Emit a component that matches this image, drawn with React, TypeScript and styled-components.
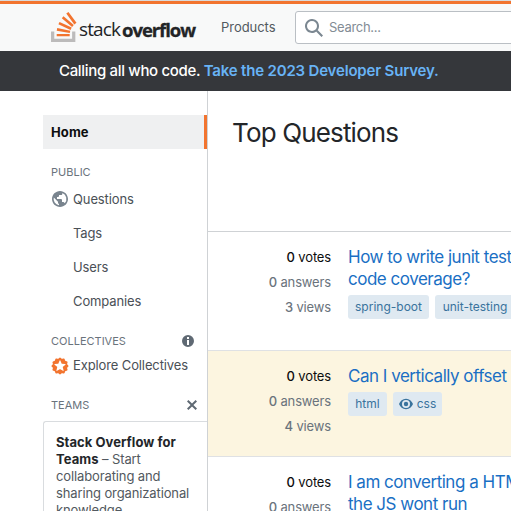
import React from 'react';
import styled, { createGlobalStyle } from 'styled-components';

const GlobalStyle = createGlobalStyle`
  * { box-sizing: border-box; }
  body { margin: 0; background: #fff; overflow: hidden; }
`;

const Page = styled.div`
  width: 511px;
  height: 511px;
  overflow: hidden;
  display: flex;
  flex-direction: column;
  background: #fff;
  color: #232629;
  font-family: Inter, 'Liberation Sans', sans-serif;
  font-size: 13px;
  line-height: 17px;
  letter-spacing: -0.12px;
  white-space: nowrap;
`;

const TopBar = styled.header`
  flex: none;
  height: 51px;
  display: flex;
  align-items: center;
  border-top: 1px solid #d9dadb;
  background: #f8f9f9;
  box-shadow: inset 0 3px 0 #f2742f;
  padding: 3px 0 0 51px;
`;

const Logo = styled.a`
  flex: none;
  display: flex;
  width: 146px;
  height: 31px;
  gap: 3px;
`;

const LogoMark = styled.svg`
  flex: none;
  display: block;
`;

const Wordmark = styled.span`
  display: flex;
  gap: 2px;
  font-family: 'Open Sans', sans-serif;
  line-height: 35px;
  color: #222426;
`;

const Stack = styled.span`
  flex: none;
  font-size: 19px;
  width: 41px;
  margin-left: -1px;
  letter-spacing: -0.9px;
`;

const Overflow = styled.span`
  font-size: 18.500px;
  font-weight: 700;
  letter-spacing: -1.050px;
  -webkit-text-stroke: 0.3px #222426;
`;

const Products = styled.a`
  flex: none;
  margin-left: 24px;
  width: 74px;
  color: #525960;
  letter-spacing: -0.05px;
`;

const SearchBox = styled.div`
  flex: none;
  display: flex;
  align-items: center;
  gap: 6px;
  width: 300px;
  height: 33px;
  padding-left: 9px;
  border: 1px solid #babfc4;
  border-radius: 3px;
  background: #fff;
  color: #838c95;
  letter-spacing: -0.3px;
`;

const Banner = styled.div`
  flex: none;
  height: 40px;
  padding-left: 59px;
  background: #35373b;
  color: #fff;
  font-size: 15px;
  line-height: 40px;
  font-weight: 500;
  letter-spacing: -0.33px;
`;

const BannerLink = styled.a`
  color: #68b3f5;
  font-weight: 600;
  letter-spacing: -0.18px;
`;

const Body = styled.div`
  flex: 1;
  min-height: 0;
  display: flex;
`;

const Sidebar = styled.nav`
  flex: none;
  width: 208px;
  padding: 24px 0 0 43px;
  border-right: 1px solid #cfd2d5;
  color: #4a5056;
`;

const Home = styled.a`
  display: block;
  height: 34px;
  padding-left: 8px;
  line-height: 35px;
  background: #eff0f1;
  border-right: 3px solid #f2742f;
  color: #0c0d0e;
  font-weight: 700;
  letter-spacing: 0.1px;
`;

const SectionHead = styled.div<{ $top: number }>`
  display: flex;
  align-items: center;
  justify-content: space-between;
  margin-top: ${(p) => p.$top}px;
  height: 16px;
  padding: 0 8px;
  font-size: 11px;
  letter-spacing: 0;
  color: #6a737c;
`;

const NavItem = styled.a<{ $height?: number }>`
  display: flex;
  align-items: center;
  gap: 4px;
  height: ${(p) => p.$height ?? 34}px;
  padding-left: 8px;
`;

const IconSlot = styled.span`
  display: flex;
  width: 18px;
`;

const TeamsCard = styled.div`
  margin-top: 8px;
  height: 130px;
  padding: 12px;
  border: 1px solid #d9dcdf;
  border-right: 0;
  border-radius: 3px 0 0 0;
  color: #525960;
`;

const Strong = styled.b`
  color: #232629;
  font-weight: 700;
  letter-spacing: 0.06px;
`;

const Main = styled.main`
  flex: 1;
  min-width: 0;
  overflow: hidden;
`;

const Title = styled.h1`
  margin: 0;
  height: 141px;
  padding: 24px 0 0 24px;
  border-bottom: 1px solid #cfd2d5;
  font-size: 26px;
  line-height: 35px;
  font-weight: 400;
  letter-spacing: -0.85px;
`;

const Question = styled.article<{ $height: number; $watched?: boolean }>`
  display: flex;
  gap: 17px;
  height: ${(p) => p.$height}px;
  padding-top: 14px;
  border-bottom: 1px solid #dfe1e4;
  background: ${(p) => (p.$watched ? '#fcf5e0' : '#fff')};
`;

const Stats = styled.div`
  flex: none;
  width: 123px;
  padding-top: 3px;
  display: flex;
  flex-direction: column;
  gap: 8px;
  text-align: right;
  letter-spacing: -0.15px;
`;

const Stat = styled.div<{ $strong?: boolean }>`
  color: ${(p) => (p.$strong ? '#0c0d0e' : '#6a737c')};
`;

const Count = styled.span`
  font-weight: 500;
`;

const QuestionTitle = styled.h3`
  margin: 0 0 5px;
  font-size: 17px;
  line-height: 22px;
  font-weight: 400;
  letter-spacing: -0.49px;
  color: #1a6fc4;
`;

const Tags = styled.div`
  display: flex;
  gap: 6px;
`;

const Tag = styled.a<{ $width: number }>`
  flex: none;
  display: flex;
  align-items: center;
  justify-content: center;
  gap: 4px;
  width: ${(p) => p.$width}px;
  height: 24px;
  padding-bottom: 1px;
  border-radius: 3px;
  background: #dfe9f1;
  color: #39739d;
  font-size: 12px;
  letter-spacing: 0;
`;

const LogoGlyph = () => (
  <LogoMark width="26" height="30" viewBox="0 0 32 37">
    <path d="M26 33v-9h4v13H0V24h4v9h22Z" fill="#BCBBBB" />
    <path
      d="m21.5 0-2.7 2 9.9 13.3 2.7-2L21.5 0ZM26 18.4 13.3 7.8l2.1-2.5 12.7 10.6-2.1 2.5ZM9.1 15.2l15 7 1.4-3-15-7-1.4 3Zm14 10.79.68-2.95-16.1-3.35L7 23l16.1 2.99ZM23 30H7v-3h16v3Z"
      fill="#F2742F"
    />
  </LogoMark>
);

const SearchIcon = () => (
  <svg width="18" height="18" viewBox="0 0 18 18" fill="#7b8791">
    <path d="m18 16.5-5.14-5.18h-.35a7 7 0 1 0-1.19 1.19v.35L16.5 18l1.5-1.5ZM12 7A5 5 0 1 1 2 7a5 5 0 0 1 10 0Z" />
  </svg>
);

const GlobeIcon = () => (
  <svg width="18" height="18" viewBox="0 0 18 18" fill="#79848e">
    <path d="M9 1C4.64 1 1 4.64 1 9c0 4.36 3.64 8 8 8 4.36 0 8-3.64 8-8 0-4.36-3.64-8-8-8ZM8 15.32a6.46 6.46 0 0 1-4.3-2.74 6.46 6.46 0 0 1-.93-5.01L7 11.68v.8c0 .88.12 1.32 1 1.32v1.52Zm5.72-2c-.2-.66-1-1.32-1.72-1.32h-1v-2c0-.44-.56-1-1-1H6V7h1c.44 0 1-.56 1-1V5h2c.88 0 1.4-.72 1.4-1.6v-.33a6.45 6.45 0 0 1 3.83 4.51 6.45 6.45 0 0 1-1.51 5.73v.01Z" />
  </svg>
);

const StarIcon = () => (
  <svg width="18" height="18" viewBox="0 0 18 18" fill="#F2742F">
    <path d="M9.86.89a1.14 1.14 0 0 0-1.72 0l-.5.58c-.3.35-.79.48-1.23.33l-.72-.25a1.14 1.14 0 0 0-1.49.85l-.14.76c-.1.45-.45.8-.9.9l-.76.14c-.67.14-1.08.83-.85 1.49l.25.72c.15.44.02.92-.33 1.23l-.58.5a1.14 1.14 0 0 0 0 1.72l.58.5c.35.3.48.79.33 1.23l-.25.72c-.23.66.18 1.35.85 1.49l.76.14c.45.1.8.45.9.9l.14.76c.14.67.83 1.08 1.49.85l.72-.25c.44-.15.92-.02 1.23.33l.5.58c.46.52 1.26.52 1.72 0l.5-.58c.3-.35.79-.48 1.23-.33l.72.25c.66.23 1.35-.18 1.49-.85l.14-.76c.1-.45.45-.8.9-.9l.76-.14c.67-.14 1.08-.83.85-1.49l-.25-.72c-.15-.44-.02-.92.33-1.23l.58-.5c.52-.46.52-1.26 0-1.72l-.58-.5c-.35-.3-.48-.79-.33-1.23l.25-.72a1.14 1.14 0 0 0-.85-1.49l-.76-.14c-.45-.1-.8-.45-.9-.9l-.14-.76a1.14 1.14 0 0 0-1.49-.85l-.72.25c-.44.15-.92.02-1.23-.33l-.5-.58Zm-.49 2.67L10.6 6.6c.05.15.19.24.34.25l3.26.22c.36.03.5.47.23.7l-2.5 2.1a.4.4 0 0 0-.14.4l.8 3.16a.4.4 0 0 1-.6.44l-2.77-1.74a.4.4 0 0 0-.43 0l-2.78 1.74a.4.4 0 0 1-.6-.44l.8-3.16a.4.4 0 0 0-.13-.4l-2.5-2.1a.4.4 0 0 1 .22-.7l3.26-.22a.4.4 0 0 0 .34-.25l1.22-3.03a.4.4 0 0 1 .74 0Z" />
  </svg>
);

const InfoIcon = () => (
  <svg width="18" height="14" viewBox="0 0 18 14" fill="#5f6973">
    <path d="M7 1a6 6 0 1 1 0 12A6 6 0 0 1 7 1Zm1 10V6H6v5h2Zm0-6V3H6v2h2Z" />
  </svg>
);

const CloseIcon = () => (
  <svg width="14" height="14" viewBox="0 0 14 14" fill="#5f6973">
    <path d="M12 3.41 10.59 2 7 5.59 3.41 2 2 3.41 5.59 7 2 10.59 3.41 12 7 8.41 10.59 12 12 10.59 8.41 7 12 3.41Z" />
  </svg>
);

const EyeIcon = () => (
  <svg width="14" height="12" viewBox="0 0 14 12" fill="#39739d" fillRule="evenodd">
    <path d="M7 .8C3.6.8 1.2 3.1 0 6c1.2 2.9 3.6 5.2 7 5.2s5.8-2.3 7-5.2C12.8 3.1 10.4.8 7 .8Zm0 9.2a4 4 0 1 1 0-8 4 4 0 0 1 0 8Z" />
    <circle cx="7" cy="6" r="2.2" />
  </svg>
);

type QuestionData = {
  height: number;
  watched?: boolean;
  views: number;
  title: string[];
  tags: { name: string; width: number; watched?: boolean }[];
};

const questions: QuestionData[] = [
  {
    height: 119,
    views: 3,
    title: ['How to write junit test', 'code coverage?'],
    tags: [
      { name: 'spring-boot', width: 81 },
      { name: 'unit-testing', width: 80 },
    ],
  },
  {
    height: 106,
    watched: true,
    views: 4,
    title: ['Can I vertically offset'],
    tags: [
      { name: 'html', width: 39 },
      { name: 'css', width: 49, watched: true },
    ],
  },
  { height: 119, views: 2, title: ['I am converting a HTML', 'the JS wont run'], tags: [] },
];

export default function App() {
  return (
    <>
      <GlobalStyle />
      <Page>
        <TopBar>
          <Logo>
            <LogoGlyph />
            <Wordmark>
              <Stack>stack</Stack>
              <Overflow>overflow</Overflow>
            </Wordmark>
          </Logo>
          <Products>Products</Products>
          <SearchBox>
            <SearchIcon />
            Search...
          </SearchBox>
        </TopBar>
        <Banner>
          Calling all who code. <BannerLink>Take the 2023 Developer Survey.</BannerLink>
        </Banner>
        <Body>
          <Sidebar>
            <Home>Home</Home>
            <SectionHead $top={15}>PUBLIC</SectionHead>
            <NavItem $height={38}>
              <IconSlot><GlobeIcon /></IconSlot>
              Questions
            </NavItem>
            <NavItem $height={30}><IconSlot />Tags</NavItem>
            <NavItem $height={38}><IconSlot />Users</NavItem>
            <NavItem $height={30}><IconSlot />Companies</NavItem>
            <SectionHead $top={17}>COLLECTIVES<InfoIcon /></SectionHead>
            <NavItem $height={33}>
              <IconSlot><StarIcon /></IconSlot>
              Explore Collectives
            </NavItem>
            <SectionHead $top={15}>TEAMS<CloseIcon /></SectionHead>
            <TeamsCard>
              <Strong>Stack Overflow for<br />Teams</Strong> – Start<br />
              collaborating and<br />
              sharing organizational<br />
              knowledge.
            </TeamsCard>
          </Sidebar>
          <Main>
            <Title>Top Questions</Title>
            {questions.map((q) => (
              <Question key={q.title[0]} $height={q.height} $watched={q.watched}>
                <Stats>
                  <Stat $strong><Count>0</Count> votes</Stat>
                  <Stat><Count>0</Count> answers</Stat>
                  <Stat><Count>{q.views}</Count> views</Stat>
                </Stats>
                <div>
                  <QuestionTitle>
                    {q.title.map((line) => <div key={line}>{line}</div>)}
                  </QuestionTitle>
                  <Tags>
                    {q.tags.map((t) => (
                      <Tag key={t.name} $width={t.width}>
                        {t.watched && <EyeIcon />}
                        {t.name}
                      </Tag>
                    ))}
                  </Tags>
                </div>
              </Question>
            ))}
          </Main>
        </Body>
      </Page>
    </>
  );
}
